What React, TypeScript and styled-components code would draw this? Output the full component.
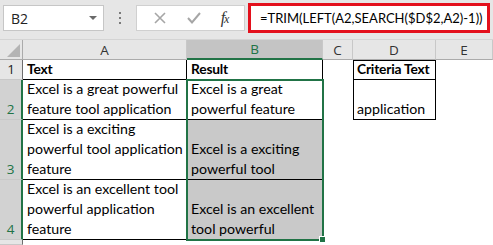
import React from "react";
import styled, { createGlobalStyle, css } from "styled-components";

const GlobalStyle = createGlobalStyle`
  html, body { margin: 0; padding: 0; background: #ffffff; }
  body { font-family: Lato, "Liberation Sans", sans-serif; }
`;

const GREEN = "#217346";
const COLS = "23px 164px 136px 30px 83px 57px";
const ROWS = "20px 20px 40px 60px 60px 5px";

const Sheet = styled.div`
  width: 493px;
  height: 245px;
  overflow: hidden;
  background: #ffffff;
`;

const Toolbar = styled.div`
  height: 40px;
  box-sizing: border-box;
  display: flex;
  align-items: flex-start;
  padding: 0 3px;
  background: #e6e6e6;
  border-bottom: 1px solid #d4d4d4;
`;

const NameBox = styled.div`
  margin-top: 5px;
  width: 101px;
  height: 26px;
  box-sizing: border-box;
  background: #fff;
  border: 1px solid #c6c6c6;
  display: flex;
  align-items: center;
  justify-content: space-between;
  padding: 0 6px 0 7px;
  font-family: "Open Sans", sans-serif;
  font-size: 14px;
  color: #222;
`;

const Caret = styled.span`
  width: 0;
  height: 0;
  border-left: 4px solid transparent;
  border-right: 4px solid transparent;
  border-top: 4px solid #6a6a6a;
`;

const Splitter = styled.div`
  width: 32px;
  height: 36px;
  display: flex;
  flex-direction: column;
  align-items: center;
  justify-content: center;
  gap: 3px;
`;

const Dot = styled.span`
  width: 2px;
  height: 2px;
  background: #7a7a7a;
`;

const FnBox = styled.div`
  margin-top: 5px;
  width: 109px;
  height: 26px;
  box-sizing: border-box;
  background: #fff;
  border: 1px solid #d0d0d0;
  display: flex;
  align-items: center;
  justify-content: space-around;
  padding: 0 6px;
`;

const Fx = styled.span`
  font-family: "Liberation Serif", serif;
  font-style: italic;
  font-size: 16px;
  color: #333;
  letter-spacing: -1px;

  small {
    font-size: 12px;
  }
`;

const FormulaBox = styled.div`
  margin-left: 3px;
  margin-top: 3px;
  width: 242px;
  height: 30px;
  box-sizing: border-box;
  background: #fff;
  border: 3px solid #e3101c;
  display: flex;
  align-items: center;
  padding-left: 9px;
  font-size: 13px;
  color: #000;
  white-space: nowrap;
  overflow: hidden;
`;

const GridWrap = styled.div`
  position: relative;
`;

const Grid = styled.div`
  display: grid;
  grid-template-columns: ${COLS};
  grid-template-rows: ${ROWS};
`;

const OverlayGrid = styled(Grid)`
  position: absolute;
  inset: 0;
  pointer-events: none;
`;

const ColHead = styled.div<{ $selected?: boolean }>`
  box-sizing: border-box;
  display: flex;
  align-items: center;
  justify-content: center;
  font-family: "Open Sans", sans-serif;
  font-size: 13.5px;
  color: ${({ $selected }) => ($selected ? GREEN : "#333")};
  background: ${({ $selected }) => ($selected ? "#c4c4c4" : "#e6e6e6")};
  border-right: 1px solid #c8c8c8;
  border-bottom: ${({ $selected }) => ($selected ? `2px solid ${GREEN}` : "1px solid #ababab")};
`;

const Corner = styled.div`
  box-sizing: border-box;
  background: #e6e6e6;
  border-right: 1px solid #ababab;
  border-bottom: 1px solid #ababab;
  display: flex;
  align-items: flex-end;
  justify-content: flex-end;
  padding: 0 2px 2px 0;
`;

const CornerMark = styled.span`
  width: 0;
  height: 0;
  border-left: 13px solid transparent;
  border-bottom: 13px solid #b4b4b4;
`;

const RowHead = styled.div<{ $selected?: boolean }>`
  box-sizing: border-box;
  display: flex;
  align-items: flex-end;
  justify-content: center;
  font-family: "Open Sans", sans-serif;
  font-size: 13.5px;
  line-height: 20px;
  color: ${({ $selected }) => ($selected ? GREEN : "#222")};
  background: ${({ $selected }) => ($selected ? "#d2d2d2" : "#e6e6e6")};
  border-bottom: 1px solid #c8c8c8;
  ${({ $selected }) =>
    $selected
      ? css`
          border-right: 2px solid ${GREEN};
        `
      : css`
          border-right: 1px solid #6e6e6e;
        `}
`;

const Cell = styled.div<{ $boxed?: boolean; $top?: boolean; $gray?: boolean; $bold?: boolean }>`
  box-sizing: border-box;
  display: flex;
  flex-direction: column;
  justify-content: flex-end;
  padding: 0 3px 0 4px;
  font-size: ${({ $bold }) => ($bold ? "13.8px" : "14.2px")};
  letter-spacing: ${({ $bold }) => ($bold ? "-0.2px" : "0")};
  line-height: 20px;
  color: #000;
  white-space: nowrap;
  font-weight: ${({ $bold }) => ($bold ? 700 : 400)};
  background: ${({ $gray }) => ($gray ? "#c9c9c9" : "#fff")};
  ${({ $boxed }) =>
    $boxed &&
    css`
      border-right: 1px solid #000;
      border-bottom: 1px solid #000;
    `}
  ${({ $top }) =>
    $top &&
    css`
      border-top: 1px solid #000;
    `}
`;

const BoxedLeft = styled(Cell)`
  border-left: 1px solid #000;
  padding-left: 3px;
`;

const Selection = styled.div`
  grid-column: 3;
  grid-row: 3 / span 3;
  margin: -1px;
  border: 2px solid ${GREEN};
  position: relative;
`;

const FillHandle = styled.span`
  position: absolute;
  right: -4px;
  bottom: -4px;
  width: 5px;
  height: 5px;
  background: ${GREEN};
  border: 1px solid #fff;
`;

const Cross = () => (
  <svg width="14" height="14" viewBox="0 0 14 14">
    <path d="M2 2 L12 12 M12 2 L2 12" stroke="#a6a6a6" strokeWidth="1.6" fill="none" />
  </svg>
);

const Check = () => (
  <svg width="16" height="14" viewBox="0 0 16 14">
    <path d="M2 7 L6 11.5 L14 2" stroke="#a6a6a6" strokeWidth="2" fill="none" />
  </svg>
);

const rows = [
  { n: 2, a: ["Excel is a great powerful", "feature tool application"], b: ["Excel is a great", "powerful feature"], gray: false },
  { n: 3, a: ["Excel is a exciting", "powerful tool application", "feature"], b: ["Excel is a exciting", "powerful tool"], gray: true },
  { n: 4, a: ["Excel is an excellent tool", "powerful application", "feature"], b: ["Excel is an excellent", "tool powerful"], gray: true },
];

const Lines = ({ lines }: { lines: string[] }) => (
  <>
    {lines.map((l) => (
      <span key={l}>{l}</span>
    ))}
  </>
);

export default function App() {
  return (
    <Sheet>
      <GlobalStyle />
      <Toolbar>
        <NameBox>
          B2
          <Caret />
        </NameBox>
        <Splitter>
          <Dot />
          <Dot />
          <Dot />
        </Splitter>
        <FnBox>
          <Cross />
          <Check />
          <Fx>
            f<small>x</small>
          </Fx>
        </FnBox>
        <FormulaBox>=TRIM(LEFT(A2,SEARCH($D$2,A2)-1))</FormulaBox>
      </Toolbar>
      <GridWrap>
        <Grid>
          <Corner>
            <CornerMark />
          </Corner>
          <ColHead>A</ColHead>
          <ColHead $selected>B</ColHead>
          <ColHead>C</ColHead>
          <ColHead>D</ColHead>
          <ColHead>E</ColHead>

          <RowHead>1</RowHead>
          <Cell $boxed $bold>Text</Cell>
          <Cell $boxed $bold>Result</Cell>
          <Cell />
          <BoxedLeft $boxed $top $bold>Criteria Text</BoxedLeft>
          <Cell />

          {rows.map((r) => (
            <React.Fragment key={r.n}>
              <RowHead $selected>{r.n}</RowHead>
              <Cell $boxed>
                <Lines lines={r.a} />
              </Cell>
              <Cell $boxed $gray={r.gray}>
                <Lines lines={r.b} />
              </Cell>
              <Cell />
              {r.n === 2 ? <BoxedLeft $boxed>application</BoxedLeft> : <Cell />}
              <Cell />
            </React.Fragment>
          ))}

          <RowHead />
          <Cell />
          <Cell />
          <Cell />
          <Cell />
          <Cell />
        </Grid>
        <OverlayGrid>
          <Selection>
            <FillHandle />
          </Selection>
        </OverlayGrid>
      </GridWrap>
    </Sheet>
  );
}
